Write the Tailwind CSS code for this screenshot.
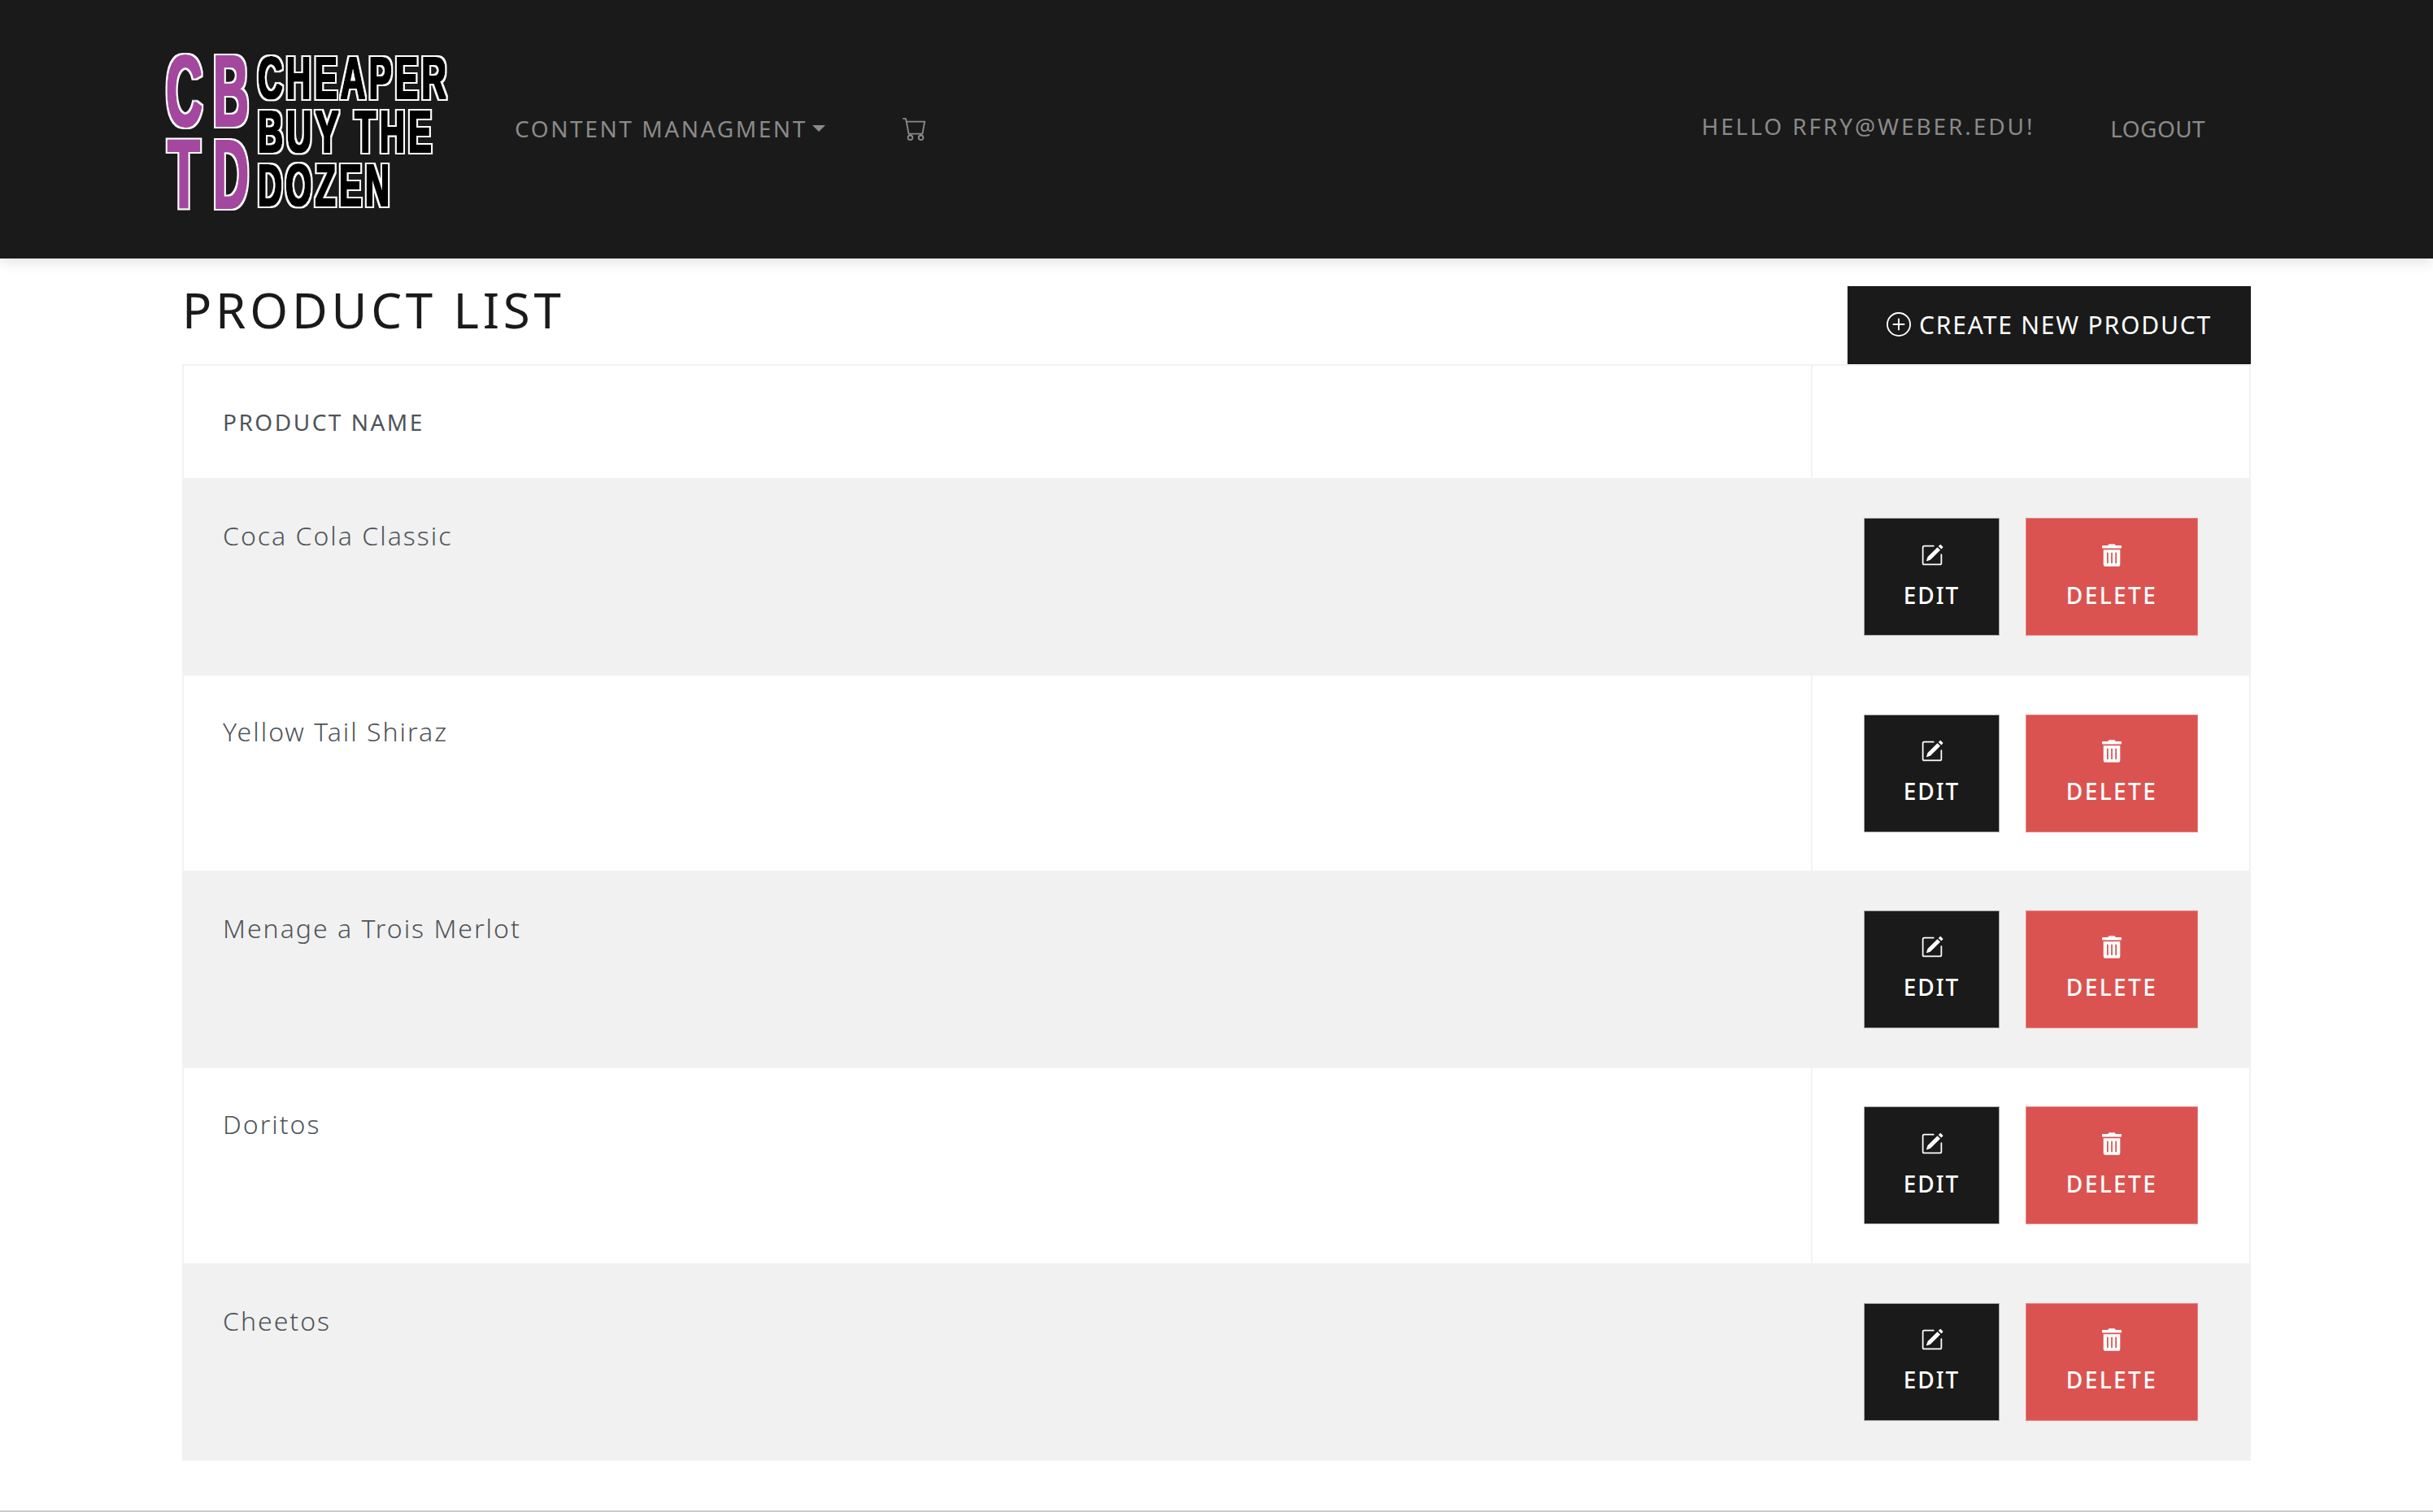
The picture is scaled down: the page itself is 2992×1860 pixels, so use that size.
<!DOCTYPE html>
<html lang="en">
<head>
  <meta charset="UTF-8" />
  <title>Product List</title>
  <script src="https://cdn.jsdelivr.net/npm/@tailwindcss/browser@4"></script>
</head>
<body class="h-[1860px] overflow-hidden bg-white font-['Noto_Sans',sans-serif] border-b-2 border-[#cccccc]">
  <header class="h-[318px] bg-[#1a1a1a] shadow-[0_4px_16px_rgba(0,0,0,0.12)] flex items-center relative">
    <svg class="ml-[196px] w-[370px] h-[210px] shrink-0" viewBox="196 55 370 210" font-family="Liberation Sans, sans-serif" font-weight="700" fill="#000000">
      <defs>
        <filter id="outline" x="-10%" y="-10%" width="120%" height="120%">
          <feMorphology in="SourceGraphic" operator="dilate" radius="0.8" result="thick"/>
          <feMorphology in="SourceAlpha" operator="dilate" radius="2.6" result="outer"/>
          <feFlood flood-color="#ffffff"/>
          <feComposite in2="outer" operator="in" result="white"/>
          <feMerge><feMergeNode in="white"/><feMergeNode in="thick"/></feMerge>
        </filter>
      </defs>
      <g filter="url(#outline)">
        <g fill="#a4479f">
          <text x="204" y="156" font-size="124" textLength="45" lengthAdjust="spacingAndGlyphs">C</text>
          <text x="262" y="156" font-size="124" textLength="44" lengthAdjust="spacingAndGlyphs">B</text>
          <text x="206" y="257" font-size="120" textLength="40" lengthAdjust="spacingAndGlyphs">T</text>
          <text x="262" y="257" font-size="120" textLength="44" lengthAdjust="spacingAndGlyphs">D</text>
        </g>
        <g letter-spacing="7">
          <text x="317" y="122" font-size="72" textLength="236" lengthAdjust="spacingAndGlyphs">CHEAPER</text>
          <text x="317" y="188" font-size="72" textLength="218" lengthAdjust="spacingAndGlyphs">BUY THE</text>
          <text x="317" y="254" font-size="72" textLength="166" lengthAdjust="spacingAndGlyphs">DOZEN</text>
        </g>
      </g>
    </svg>
    <nav class="ml-[67px] -mt-[2px] flex items-center text-[#8a8a8a] text-[28px] tracking-[2.6px]">
      <a class="flex items-center">CONTENT MANAGMENT<span class="ml-[6px] border-x-[8px] border-t-[8px] border-x-transparent border-t-[#8a8a8a]"></span></a>
      <svg class="ml-[95px] w-[30px] h-[30px]" viewBox="0 0 16 16" fill="#8a8a8a"><path d="M0 1.5A.5.5 0 0 1 .5 1H2a.5.5 0 0 1 .485.379L2.89 3H14.5a.5.5 0 0 1 .491.592l-1.5 8A.5.5 0 0 1 13 12H4a.5.5 0 0 1-.491-.408L2.01 3.607 1.61 2H.5a.5.5 0 0 1-.5-.5zM3.102 4l1.313 7h8.17l1.313-7H3.102zM5 12a2 2 0 1 0 0 4 2 2 0 0 0 0-4zm7 0a2 2 0 1 0 0 4 2 2 0 0 0 0-4zm-7 1a1 1 0 1 1 0 2 1 1 0 0 1 0-2zm7 0a1 1 0 1 1 0 2 1 1 0 0 1 0-2z"/></svg>
    </nav>
    <div class="ml-auto mr-[280px] -mt-[2px] flex items-center text-[#8a8a8a] text-[28px]">
      <span class="-mt-[6px] tracking-[2.9px]">HELLO RFRY@WEBER.EDU!</span>
      <a class="ml-[93px] tracking-[0.4px]">LOGOUT</a>
    </div>
  </header>

  <main class="mx-[224px] w-[2544px]">
    <div class="h-[130px] flex justify-between items-end">
      <h1 class="mb-[22px] text-[60px] leading-[90px] tracking-[4.8px] text-[#1a1a1a]">PRODUCT LIST</h1>
      <button class="w-[496px] h-[96px] pb-[2px] bg-[#1a1a1a] text-white text-[30px] tracking-[1.8px] flex items-center justify-center gap-[10px]">
        <svg class="w-[30px] h-[30px]" viewBox="0 0 16 16" fill="#ffffff"><path d="M8 15A7 7 0 1 1 8 1a7 7 0 0 1 0 14zm0 1A8 8 0 1 0 8 0a8 8 0 0 0 0 16z"/><path d="M8 4a.5.5 0 0 1 .5.5v3h3a.5.5 0 0 1 0 1h-3v3a.5.5 0 0 1-1 0v-3h-3a.5.5 0 0 1 0-1h3v-3A.5.5 0 0 1 8 4z"/></svg>
        CREATE NEW PRODUCT
      </button>
    </div>

    <table id="product-table" class="w-full table-fixed border-collapse text-[#4f5459]">
      <thead>
        <tr class="h-[140px]">
          <th class="w-[2003px] border-2 border-[#f2f2f2] pl-[48px] text-left font-normal text-[28px] tracking-[2.5px]">PRODUCT NAME</th>
          <th class="border-2 border-[#f2f2f2]"></th>
        </tr>
      </thead>
      <tbody></tbody>
    </table>
  </main>

  <script>
    const products = ['Coca Cola Classic', 'Yellow Tail Shiraz', 'Menage a Trois Merlot', 'Doritos', 'Cheetos'];
    const tableBody = document.querySelector('#product-table tbody');

    products.forEach((name, i) => {
      const row = document.createElement('tr');
      row.className = i % 2 === 0 ? 'h-[241.4px] bg-[#f1f1f1]' : 'h-[241.4px]';
      const border = i % 2 === 0 ? 'border-[#f1f1f1]' : 'border-[#f2f2f2]';
      row.innerHTML = `
        <td class="border-2 ${border} pl-[48px] pt-[45px] align-top text-[32px] leading-[48px] tracking-[2px] font-light">${name}</td>
        <td class="border-2 ${border}">
          <div class="flex justify-center gap-[32px]">
            <button class="w-[167px] h-[145px] pt-[2px] bg-[#1a1a1a] border border-[#aaaaaa] text-white text-[28px] font-medium tracking-[2px] flex flex-col items-center justify-center gap-[14px]">
              <svg class="w-[28px] h-[28px]" viewBox="0 0 16 16" fill="#ffffff"><path d="M15.502 1.94a.5.5 0 0 1 0 .706L14.459 3.69l-2-2L13.502.646a.5.5 0 0 1 .707 0l1.293 1.293zm-1.75 2.456-2-2L4.939 9.21a.5.5 0 0 0-.121.196l-.805 2.414a.25.25 0 0 0 .316.316l2.414-.805a.5.5 0 0 0 .196-.12l6.813-6.814z"/><path d="M1 13.5A1.5 1.5 0 0 0 2.5 15h11a1.5 1.5 0 0 0 1.5-1.5v-6a.5.5 0 0 0-1 0v6a.5.5 0 0 1-.5.5h-11a.5.5 0 0 1-.5-.5v-11a.5.5 0 0 1 .5-.5H9a.5.5 0 0 0 0-1H2.5A1.5 1.5 0 0 0 1 2.5v11z"/></svg>
              EDIT
            </button>
            <button class="w-[212px] h-[145px] pt-[2px] bg-[#da5350] border border-[#e88a88] text-white text-[28px] font-medium tracking-[2.4px] flex flex-col items-center justify-center gap-[14px]">
              <svg class="w-[24px] h-[28px]" viewBox="0 0 448 512" fill="#ffffff"><path d="M32 464a48 48 0 0 0 48 48h288a48 48 0 0 0 48-48V128H32zm272-256a16 16 0 0 1 32 0v224a16 16 0 0 1-32 0zm-96 0a16 16 0 0 1 32 0v224a16 16 0 0 1-32 0zm-96 0a16 16 0 0 1 32 0v224a16 16 0 0 1-32 0zM432 32H312l-9.4-18.7A24 24 0 0 0 281.1 0H166.8a23.72 23.72 0 0 0-21.4 13.3L136 32H16A16 16 0 0 0 0 48v32a16 16 0 0 0 16 16h416a16 16 0 0 0 16-16V48a16 16 0 0 0-16-16z"/></svg>
              DELETE
            </button>
          </div>
        </td>`;
      tableBody.appendChild(row);
    });
  </script>
</body>
</html>
